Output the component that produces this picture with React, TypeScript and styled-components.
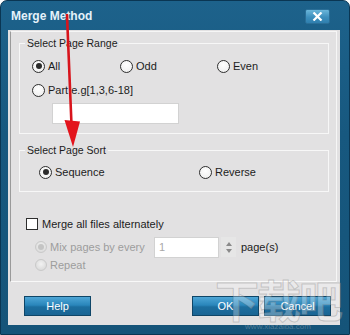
import styled, { createGlobalStyle } from "styled-components";

const Global = createGlobalStyle`
  html, body {
    margin: 0;
    padding: 0;
    background: #ffffff;
  }
  body {
    font-family: "Liberation Sans", Arial, sans-serif;
    font-size: 11px;
    color: #1c1c1c;
  }
`;

const Window = styled.div`
  position: relative;
  width: 350px;
  height: 335px;
  box-sizing: border-box;
  display: flex;
  flex-direction: column;
  padding: 0 9px 9px 7px;
  background: linear-gradient(#1d628b, #17587f 40%, #155479);
  border: 1px solid #0a3653;
  border-radius: 7px 7px 0 0;
  overflow: hidden;
`;

const TitleBar = styled.div`
  height: 29px;
  flex: none;
  display: flex;
  align-items: center;
  justify-content: space-between;
  padding-left: 3px;
`;

const Title = styled.span`
  font-weight: bold;
  font-size: 12px;
  color: #e4f2fa;
  margin-top: 1px;
`;

const CloseButton = styled.div`
  width: 25px;
  height: 15px;
  margin: 2px 10px 0 0;
  box-sizing: border-box;
  display: flex;
  align-items: center;
  justify-content: center;
  background: linear-gradient(#6bb6da, #3d8fbd 55%, #2f7fae);
  border: 1px solid #2a6e97;
  border-radius: 2px;
`;

const Panel = styled.div`
  flex: 1;
  display: flex;
  flex-direction: column;
  background: #e2e1e2;
`;

const InnerFrame = styled.div`
  margin: 1px 3px 0 2px;
  padding: 4px 0 8px 0;
  border-left: 1px solid #9a9a9a;
  border-top: 1px solid #f6f6f6;
  border-right: 1px solid #f6f6f6;
  border-bottom: 1px solid #f8f8f8;
  display: flex;
  flex-direction: column;
`;

const Group = styled.fieldset<{ $gap?: number }>`
  margin: ${(p) => p.$gap ?? 0}px 7px 0 8px;
  padding: 0;
  border: 1px solid #f7f7f7;
  min-width: 0;
`;

const Caption = styled.legend`
  margin-left: 5px;
  padding: 0 2px;
  font-size: 10.5px;
  line-height: 14px;
  color: #1c1c1c;
`;

const GroupBody = styled.div<{ $pad: string }>`
  padding: ${(p) => p.$pad};
  display: flex;
  flex-direction: column;
`;

const OptionGrid = styled.div<{ $cols: string; $top?: number }>`
  display: grid;
  grid-template-columns: ${(p) => p.$cols};
  height: 20px;
  margin-top: ${(p) => p.$top ?? 0}px;
  align-items: center;
`;

const Option = styled.label<{ $disabled?: boolean }>`
  display: flex;
  align-items: center;
  gap: 3px;
  height: 20px;
  white-space: nowrap;
  color: ${(p) => (p.$disabled ? "#9d9d9d" : "#1c1c1c")};
`;

const Radio = styled.span<{ $checked?: boolean; $disabled?: boolean; $size?: number }>`
  position: relative;
  flex: none;
  width: ${(p) => p.$size ?? 13}px;
  height: ${(p) => p.$size ?? 13}px;
  box-sizing: border-box;
  border-radius: 50%;
  border: 1px solid ${(p) => (p.$disabled ? "#c9c9c9" : "#2e2e2e")};
  background: ${(p) =>
    p.$disabled
      ? "radial-gradient(circle at 50% 40%, #f2f2f2, #d4d4d4)"
      : "radial-gradient(circle at 50% 35%, #ffffff, #ececec)"};

  &::after {
    content: "";
    display: ${(p) => (p.$checked ? "block" : "none")};
    position: absolute;
    left: 50%;
    top: 50%;
    width: 6px;
    height: 6px;
    margin: -3px 0 0 -3px;
    border-radius: 50%;
    background: ${(p) => (p.$disabled ? "#c4c4c4" : "#2b2b2b")};
  }
`;

const TextBox = styled.div<{ $w: number }>`
  width: ${(p) => p.$w}px;
  height: 21px;
  box-sizing: border-box;
  background: #ffffff;
  border: 1px solid #d2d2d2;
  display: flex;
  align-items: center;
  padding-left: 4px;
  color: #a8a8a8;
`;

const PartBox = styled(TextBox)`
  margin: 3px 0 0 20px;
`;

const CheckRow = styled.label`
  display: flex;
  align-items: center;
  gap: 4px;
  height: 20px;
  margin-top: 22px;
  padding-left: 15px;
`;

const CheckBox = styled.span`
  width: 12px;
  height: 12px;
  box-sizing: border-box;
  border: 1px solid #2e2e2e;
  background: #ffffff;
`;

const SubRow = styled.div<{ $h: number; $top: number }>`
  display: flex;
  align-items: center;
  height: ${(p) => p.$h}px;
  margin-top: ${(p) => p.$top}px;
  padding-left: 24px;
`;

const MixLabel = styled(Option)`
  width: 119px;
`;

const Spinner = styled.div`
  display: flex;
  flex-direction: column;
  justify-content: center;
  gap: 3px;
  width: 15px;
  height: 20px;
  margin-left: 2px;
  align-items: center;
  background: #e6e6e6;
`;

const Arrow = styled.span<{ $up?: boolean }>`
  width: 0;
  height: 0;
  border-left: 3px solid transparent;
  border-right: 3px solid transparent;
  ${(p) => (p.$up ? "border-bottom: 4px solid #8a8a8a;" : "border-top: 4px solid #8a8a8a;")}
`;

const Unit = styled.span`
  margin-left: 5px;
  color: #1c1c1c;
`;

const ButtonRow = styled.div`
  display: flex;
  align-items: center;
  margin-top: 14px;
  padding: 0 9px 0 16px;
  gap: 5px;
`;

const Button = styled.div<{ $push?: boolean }>`
  width: 67px;
  height: 20px;
  box-sizing: border-box;
  display: flex;
  align-items: center;
  justify-content: center;
  margin-left: ${(p) => (p.$push ? "auto" : "0")};
  color: #ffffff;
  font-size: 11px;
  background: linear-gradient(#4ea6d6, #2a86bb 45%, #1c6e9f 55%, #1a6594);
  border: 1px solid #0f4668;
`;

const Overlay = styled.svg`
  position: absolute;
  left: 0;
  top: 0;
  pointer-events: none;
`;

const Watermark = styled.div`
  position: absolute;
  right: 8px;
  bottom: 3px;
  display: flex;
  flex-direction: column;
  align-items: center;
  pointer-events: none;
`;

const MarkText = styled.span`
  font-family: "Noto Sans CJK SC", sans-serif;
  font-weight: bold;
  font-size: 44px;
  line-height: 46px;
  letter-spacing: -2px;
  color: rgba(255, 255, 255, 0.3);
  -webkit-text-stroke: 1px rgba(110, 110, 110, 0.3);
`;

const MarkUrl = styled.span`
  font-family: "Liberation Sans", Arial, sans-serif;
  font-size: 8px;
  line-height: 9px;
  color: rgba(190, 200, 210, 0.35);
`;

export default function App() {
  return (
    <>
      <Global />
      <Window>
        <TitleBar>
          <Title>Merge Method</Title>
          <CloseButton>
            <svg width="11" height="9" viewBox="0 0 11 9">
              <path d="M1.5 0.5 L9.5 8.5 M9.5 0.5 L1.5 8.5" stroke="#ffffff" strokeWidth="2.2" />
            </svg>
          </CloseButton>
        </TitleBar>
        <Panel>
          <InnerFrame>
            <Group>
              <Caption>Select Page Range</Caption>
              <GroupBody $pad="6px 0 9px 12px">
                <OptionGrid $cols="88px 97px 1fr">
                  <Option>
                    <Radio $checked />
                    All
                  </Option>
                  <Option>
                    <Radio />
                    Odd
                  </Option>
                  <Option>
                    <Radio />
                    Even
                  </Option>
                </OptionGrid>
                <OptionGrid $cols="1fr" $top={4}>
                  <Option>
                    <Radio />
                    Part.e.g[1,3,6-18]
                  </Option>
                </OptionGrid>
                <PartBox $w={127} />
              </GroupBody>
            </Group>
            <Group $gap={9}>
              <Caption>Select Page Sort</Caption>
              <GroupBody $pad="5px 0 9px 19px">
                <OptionGrid $cols="160px 1fr">
                  <Option>
                    <Radio $checked />
                    Sequence
                  </Option>
                  <Option>
                    <Radio />
                    Reverse
                  </Option>
                </OptionGrid>
              </GroupBody>
            </Group>
            <CheckRow>
              <CheckBox />
              Merge all files alternately
            </CheckRow>
            <SubRow $h={20} $top={3}>
              <MixLabel $disabled>
                <Radio $disabled $checked $size={12} />
                Mix pages by every
              </MixLabel>
              <TextBox $w={65}>1</TextBox>
              <Spinner>
                <Arrow $up />
                <Arrow />
              </Spinner>
              <Unit>page(s)</Unit>
            </SubRow>
            <SubRow $h={16} $top={0}>
              <Option $disabled>
                <Radio $disabled $size={12} />
                Repeat
              </Option>
            </SubRow>
          </InnerFrame>
          <ButtonRow>
            <Button>Help</Button>
            <Button $push>OK</Button>
            <Button>Cancel</Button>
          </ButtonRow>
        </Panel>
        <Watermark>
          <MarkText>下载吧</MarkText>
          <MarkUrl>www.xiazaiba.com</MarkUrl>
        </Watermark>
        <Overlay width="350" height="335" viewBox="0 0 350 335">
          <path d="M66 14 L70.5 124" stroke="#d8141c" strokeWidth="2.6" strokeLinecap="round" />
          <polygon points="63.5,119 79,120.5 72,146" fill="#e3141c" />
        </Overlay>
      </Window>
    </>
  );
}
